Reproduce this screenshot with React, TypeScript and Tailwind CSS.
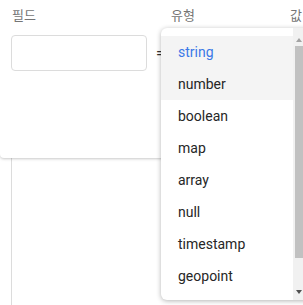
import React from "react";

const items = ["string", "number", "boolean", "map", "array", "null", "timestamp", "geopoint"];

export default function App() {
  return (
    <div className="relative w-[303px] h-[305px] bg-white overflow-hidden font-['Roboto','Noto_Sans_CJK_KR',sans-serif]">
      <div className="relative z-10 h-[158px] bg-white rounded-bl-[4px] shadow-[0_1px_3px_rgba(0,0,0,0.22)]">
        <div className="flex pt-[7px] text-[13px] leading-[18px] text-[#757575]">
          <div className="ml-[12px] w-[159px]">필드</div>
          <div className="w-[119px]">유형</div>
          <div>값</div>
        </div>
        <div className="flex items-center mt-[10px]">
          <div className="ml-[11px] w-[136px] h-[36px] border border-[#dcdcdc] rounded-[4px]"></div>
          <div className="ml-[9px] text-[15px] text-[#333] leading-none">=</div>
        </div>
      </div>
      <div className="ml-[11px] w-px h-[147px] bg-[#dcdcdc]"></div>
      <div className="absolute z-20 left-[161px] top-[28px] w-[150px] h-[272px] bg-white rounded-[6px] shadow-[0_1px_5px_rgba(0,0,0,0.3)] overflow-hidden flex">
        <div className="w-[132px] pt-[8px]">
          {items.map((it, i) => (
            <div
              key={it}
              className={
                "h-[32px] flex items-center pl-[17px] text-[14px] " +
                (i < 2 ? "bg-[#f4f4f4] " : "") +
                (i === 0 ? "text-[#3b78e7]" : "text-[#262626]")
              }
            >
              {it}
            </div>
          ))}
        </div>
        <div className="w-[10px] bg-[#f1f1f1] flex flex-col items-end">
          <div className="h-[18px] w-[8px] flex items-end justify-center pb-[4px]">
            <div className="w-0 h-0 border-l-[3px] border-r-[3px] border-b-[4px] border-l-transparent border-r-transparent border-b-[#a3a3a3]"></div>
          </div>
          <div className="w-[8px] h-[212px] bg-[#c1c1c1]"></div>
          <div className="flex-1 w-[8px] flex items-end justify-center pb-[6px]">
            <div className="w-0 h-0 border-l-[3px] border-r-[3px] border-t-[4px] border-l-transparent border-r-transparent border-t-[#505050]"></div>
          </div>
        </div>
      </div>
    </div>
  );
}
